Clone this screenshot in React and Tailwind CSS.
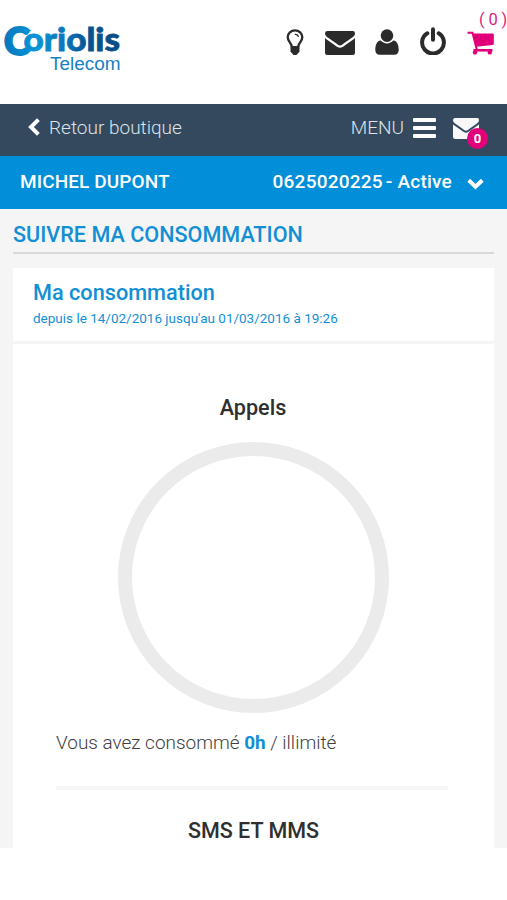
import React from "react";

const Logo = () => (
  <svg className="mt-[14px] h-[72px] w-[130px] shrink-0" viewBox="0 14 130 72" aria-label="Coriolis Telecom">
    <defs>
      <linearGradient id="word" x1="4" y1="0" x2="120" y2="0" gradientUnits="userSpaceOnUse">
        <stop offset="0" stopColor="#0878bd" />
        <stop offset="0.28" stopColor="#0895d8" />
        <stop offset="0.55" stopColor="#0872b8" />
        <stop offset="0.72" stopColor="#06558f" />
        <stop offset="1" stopColor="#074c84" />
      </linearGradient>
    </defs>
    <text y="51.2" fontWeight="900" fill="url(#word)" stroke="url(#word)" strokeWidth="0.8" textLength="116" lengthAdjust="spacingAndGlyphs" x="4" className="font-['Lato',sans-serif]">
      <tspan fontSize="37" dy="3.4" strokeWidth="2">C</tspan>
      <tspan fontSize="33" dy="-3.4" dx="-6">oriolis</tspan>
    </text>
    <text x="50" y="69.5" fontSize="17.5" fill="#187fc3" textLength="70.5" lengthAdjust="spacingAndGlyphs" className="font-['Liberation_Sans',sans-serif]">Telecom</text>
  </svg>
);

const Bulb = () => (
  <svg className="h-[26px] w-[18px] shrink-0" viewBox="0 0 18 26" fill="none" stroke="#2b2b2b">
    <path d="M6 18C5.700 14 1.700 12.600 1.700 8.300a7.300 6.900 0 0 1 14.600 0c0 4.300-4 5.700-4.300 9.700" strokeWidth="2.300" />
    <path d="M9.300 5.300c1.800 0 2.700.8 3 2.200" strokeWidth="1.200" strokeLinecap="round" />
    <path d="M4.500 17h9v5.800l-1.500 1.500-1.500 1.700h-3L6 24.300l-1.500-1.500z" fill="#2b2b2b" stroke="none" />
  </svg>
);

const Envelope = ({ className }) => (
  <svg className={className} viewBox="0 0 30 24" preserveAspectRatio="none" fill="currentColor">
    <path d="M2.500 0h25A2.300 2.300 0 0 1 30 2.300c0 2-1.400 3.300-2.800 4.300L18.600 12.600C17.200 13.600 16.200 14.600 15 14.600s-2.200-1-3.600-2L2.800 6.600C1.400 5.600 0 4.300 0 2.600A2.500 2.500 0 0 1 2.500 0z" />
    <path d="M0 7c.5.6 1.100 1 1.700 1.500l8.200 5.700c1.700 1.200 3.300 2.600 5.100 2.600s3.400-1.400 5.100-2.600l8.200-5.700C28.900 8 29.500 7.600 30 7v14.500a2.500 2.500 0 0 1-2.500 2.500h-25A2.500 2.500 0 0 1 0 21.500z" />
  </svg>
);

const User = () => (
  <svg className="h-[26px] w-[24px] shrink-0" viewBox="0 0 24 26" fill="#2b2b2b">
    <circle cx="12" cy="6.600" r="6.300" />
    <path d="M5.800 11.500C1.500 12 .3 16.600.3 21c0 3 1.700 4.800 4.500 4.800h14.400c2.800 0 4.500-1.800 4.500-4.800 0-4.400-1.200-9-5.500-9.500-1.600 1.800-3.800 2.900-6.200 2.900s-4.600-1.100-6.200-2.900z" />
  </svg>
);

const Power = () => (
  <svg className="h-[28px] w-[26px] shrink-0" viewBox="0 0 26 28" fill="none" stroke="#2b2b2b" strokeWidth="4" strokeLinecap="round">
    <path d="M7.300 6.300a10.900 10.900 0 1 0 11.400 0" />
    <path d="M13 2.200v10.500" />
  </svg>
);

const Cart = () => (
  <svg className="h-[24px] w-[28px] shrink-0" viewBox="0 0 28 24" fill="#e2007a">
    <path d="M.5 1.800h5l4.200 16.400" fill="none" stroke="#e2007a" strokeWidth="2" />
    <path d="M5.500 2.400h20.300q1 0 1 1v9.300q0 1-1 1.200L9 15.800z" />
    <path d="M6.500 18h19v2.600h-19z" />
    <circle cx="8" cy="21.400" r="2.200" />
    <circle cx="22.800" cy="21.400" r="2.200" />
  </svg>
);

const Header = () => (
  <header className="relative flex h-[104px] items-start bg-white">
    <Logo />
    <div className="ml-auto mr-[12px] mt-[27px] flex h-[28px] items-end text-[#2b2b2b]">
      <Bulb />
      <Envelope className="ml-[21px] h-[24px] w-[30px] shrink-0" />
      <span className="ml-[20px] flex"><User /></span>
      <span className="ml-[21px] flex"><Power /></span>
      <span className="ml-[21px] flex"><Cart /></span>
    </div>
    <span className="absolute right-0 top-[9px] whitespace-pre text-[16.500px] leading-[22px] tracking-[-0.01em] text-[#d82582]">( 0 )</span>
  </header>
);

const NavBar = () => (
  <nav className="flex h-[52px] items-start bg-[#34495e] pl-[28px] pt-[14px] text-[19px] font-light leading-[20px] text-[#dce3ea]">
    <svg className="mt-[-1px] h-[20px] w-[12px]" viewBox="0 0 12 20" fill="none" stroke="#fff" strokeWidth="4">
      <path d="M10.400 2.700 3 10l7.400 7.300" />
    </svg>
    <a href="#boutique" className="ml-[9px]">Retour boutique</a>
    <span className="ml-auto">MENU</span>
    <div className="ml-[9px] flex w-[23px] flex-col gap-[4px]">
      <span className="h-[4px] rounded-[1px] bg-white" />
      <span className="h-[4px] rounded-[1px] bg-white" />
      <span className="h-[4px] rounded-[1px] bg-white" />
    </div>
    <div className="relative ml-[17px] mr-[28px] text-[#f8f8f8]">
      <Envelope className="h-[21px] w-[26px]" />
      <span className="absolute left-[14px] top-[10px] flex size-[21px] items-center justify-center rounded-full bg-[#e2007a] text-[13px] font-bold text-white">0</span>
    </div>
  </nav>
);

const AccountBar = () => (
  <div className="flex h-[53px] items-center bg-[#008fd8] pl-[20px] pr-[23px] text-[19px] font-medium text-white">
    <span className="tracking-[0.005em]">MICHEL DUPONT</span>
    <span className="ml-auto whitespace-nowrap tracking-[0.012em]">0625020225<span className="ml-[3px]">- Active</span></span>
    <svg className="ml-[15px] mt-[2px] h-[12px] w-[17px]" viewBox="0 0 17 12" fill="none" stroke="#fff" strokeWidth="4">
      <path d="m1.700 2.300 6.800 6.400 6.800-6.400" />
    </svg>
  </div>
);

const App = () => {
  return (
    <div className="h-[900px] w-[507px] overflow-hidden bg-white font-['Roboto',sans-serif]">
      <Header />
      <NavBar />
      <AccountBar />
      <main className="h-[639px] overflow-hidden bg-[#f5f5f5] px-[13px]">
        <h1 className="h-[45px] border-b-2 border-[#d9d9d9] pt-[12px] text-[21.600px] font-medium leading-[28px] text-[#138fd5]">SUIVRE MA CONSOMMATION</h1>
        <section className="mt-[14px] h-[73px] bg-white pl-[20px] pt-[11px] text-[#138fd5]">
          <h2 className="text-[21.700px] font-medium leading-[28px]">Ma consommation</h2>
          <p className="mt-[2px] text-[13.500px] leading-[18px]">depuis le 14/02/2016 jusqu'au 01/03/2016 à 19:26</p>
        </section>
        <section className="mt-[3px] h-[520px] bg-white pl-[43px] pr-[45px] pt-[50px]">
          <h3 className="pl-px text-center text-[21.600px] font-medium leading-[28px] text-[#2f2f2f]">Appels</h3>
          <div className="ml-[62px] mt-[20px] size-[271px] rounded-full border-[14px] border-[#ebebeb]" />
          <p className="mt-[16px] text-[18.950px] font-light leading-[28px] text-[#404040]">
            Vous avez consommé <b className="font-bold text-[#138fd5]">0h</b> / illimité
          </p>
          <hr className="mr-px mt-[29px] border-t-4 border-[#f6f6f6]" />
          <h3 className="mt-[27px] pl-[2px] text-center text-[21.500px] font-medium leading-[28px] text-[#2f2f2f]">SMS ET MMS</h3>
        </section>
      </main>
    </div>
  );
};

export default App;
